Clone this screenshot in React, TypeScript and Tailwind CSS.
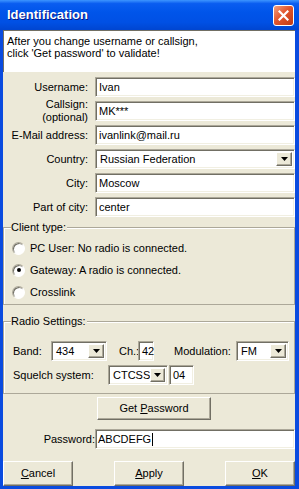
// Identification dialog (Windows XP look)
import type { ReactNode } from "react";

const sunken =
  "border border-t-[#ACA899] border-l-[#ACA899] border-b-white border-r-white shadow-[inset_1px_1px_0_#716F64,inset_-1px_-1px_0_#F1EFE2] bg-white";
const raised =
  "border border-t-white border-l-white border-b-[#716F64] border-r-[#716F64] shadow-[inset_-1px_-1px_0_#ACA899] bg-[#ECE9D8]";

function TextBox({ value, className = "" }: { value: string; className?: string }) {
  return (
    <div className={`${sunken} flex h-full items-center pl-[3px] ${className}`}>
      <span className="leading-none">{value}</span>
    </div>
  );
}

function Arrow() {
  return (
    <svg width="7" height="4" viewBox="0 0 7 4">
      <path d="M0 0h7L3.5 4z" fill="#000" />
    </svg>
  );
}

function Combo({ value, className = "" }: { value: string; className?: string }) {
  return (
    <div className={`${sunken} flex h-full items-center p-[2px] pl-[4px] ${className}`}>
      <span className="flex-1 leading-none">{value}</span>
      <div className={`${raised} flex h-full w-[16px] items-center justify-center`}>
        <Arrow />
      </div>
    </div>
  );
}

function Row({ label, children }: { label: ReactNode; children: ReactNode }) {
  return (
    <div className="flex h-[20px] items-center">
      <div className="w-[85px] text-right leading-[13px]">{label}</div>
      <div className="ml-[7px] h-full flex-1">{children}</div>
    </div>
  );
}

function Radio({ checked, label }: { checked?: boolean; label: string }) {
  return (
    <div className="flex h-[22px] items-center pl-[8px]">
      <div className="flex size-[13px] items-center justify-center rounded-full border border-t-[#ACA899] border-l-[#ACA899] border-b-white border-r-white bg-white shadow-[inset_1px_1px_0_#716F64]">
        {checked && <div className="size-[4px] rounded-full bg-black" />}
      </div>
      <span className="ml-[5px]">{label}</span>
    </div>
  );
}

function Group({ title, className = "", children }: { title: string; className?: string; children: ReactNode }) {
  return (
    <div className={`relative border border-[#ACA899] shadow-[inset_1px_1px_0_white] ${className}`}>
      <span className="absolute -top-[7px] left-[7px] bg-[#ECE9D8] pr-[1px] leading-[13px]">{title}</span>
      {children}
    </div>
  );
}

function Btn({ children, className = "" }: { children: ReactNode; className?: string }) {
  return (
    <div className={`${raised} flex items-center justify-center ${className}`}>{children}</div>
  );
}

export default function App() {
  return (
    <div className="flex h-[489px] w-[299px] flex-col bg-[#0A4BDF] pb-[3px] pl-[3px] pr-[4px] font-['Liberation_Sans',Arial,sans-serif] text-[11px] text-black">
      {/* title bar */}
      <div className="-ml-[3px] -mr-[4px] flex h-[30px] shrink-0 items-center bg-[linear-gradient(to_bottom,#3D95FF_0%,#0A5DF0_12%,#0055EA_40%,#0050E4_75%,#0045D0_100%)] pl-[7px] pr-[5px]">
        <span className="flex-1 text-[13px] font-bold text-white [text-shadow:1px_1px_#0A1883]">Identification</span>
        <div className="flex size-[21px] items-center justify-center rounded-[3px] border border-white bg-[linear-gradient(135deg,#F0A080_0%,#E2562E_45%,#C13A14_100%)]">
          <svg width="11" height="11" viewBox="0 0 11 11">
            <path d="M1.5 1.5l8 8M9.5 1.5l-8 8" stroke="#fff" strokeWidth="2.2" strokeLinecap="square" />
          </svg>
        </div>
      </div>

      <div className="flex flex-1 flex-col bg-[#ECE9D8]">
        {/* hint */}
        <div className="h-[42px] border-l border-t border-[#716F64] bg-white pl-[3px] pt-[4px] leading-[12px]">
          After you change username or callsign,
          <br />
          click 'Get password' to validate!
        </div>

        <div className="mt-[5px] flex flex-col gap-[4px]">
          <Row label="Username:">
            <TextBox value="Ivan" />
          </Row>
          <Row
            label={
              <>
                Callsign:
                <br />
                (optional)
              </>
            }
          >
            <TextBox value="MK***" />
          </Row>
          <Row label="E-Mail address:">
            <TextBox value="ivanlink@mail.ru" />
          </Row>
          <Row label="Country:">
            <Combo value="Russian Federation" />
          </Row>
          <Row label="City:">
            <TextBox value="Moscow" />
          </Row>
          <Row label="Part of city:">
            <TextBox value="center" />
          </Row>
        </div>

        <Group title="Client type:" className="mt-[10px] h-[78px] pt-[9px]">
          <Radio label="PC User: No radio is connected." />
          <Radio checked label="Gateway: A radio is connected." />
          <Radio label="Crosslink" />
        </Group>

        <Group title="Radio Settings:" className="mt-[16px] h-[73px] pt-[19px]">
          <div className="flex h-[20px] items-center pl-[9px]">
            <span className="w-[38px]">Band:</span>
            <Combo value="434" className="w-[56px]" />
            <span className="ml-[12px] w-[19px]">Ch.:</span>
            <TextBox value="42" className="w-[16px]" />
            <span className="ml-[20px] w-[62px]">Modulation:</span>
            <Combo value="FM" className="w-[53px]" />
          </div>
          <div className="mt-[4px] flex h-[20px] items-center pl-[9px]">
            <span className="w-[95px]">Squelch system:</span>
            <Combo value="CTCSS" className="w-[60px]" />
            <TextBox value="04" className="ml-[1px] w-[25px]" />
          </div>
        </Group>

        <Btn className="ml-[94px] mt-[3px] h-[23px] w-[114px]">
          <span>
            Get <u>P</u>assword
          </span>
        </Btn>

        <div className="mt-[9px] flex h-[20px] items-center">
          <span className="w-[92px] text-right">Password:</span>
          <div className={`${sunken} flex h-full flex-1 items-center pl-[2px]`}>
            <span className="leading-none">ABCDEFG</span>
            <span className="ml-[1px] h-[13px] w-px bg-black" />
          </div>
        </div>

        <div className="mt-[12px] flex h-[25px] justify-between">
          <Btn className="w-[70px]">
            <span>
              <u>C</u>ancel
            </span>
          </Btn>
          <Btn className="w-[70px]">
            <span>
              <u>A</u>pply
            </span>
          </Btn>
          <Btn className="w-[70px]">
            <span>
              <u>O</u>K
            </span>
          </Btn>
        </div>
      </div>
    </div>
  );
}
